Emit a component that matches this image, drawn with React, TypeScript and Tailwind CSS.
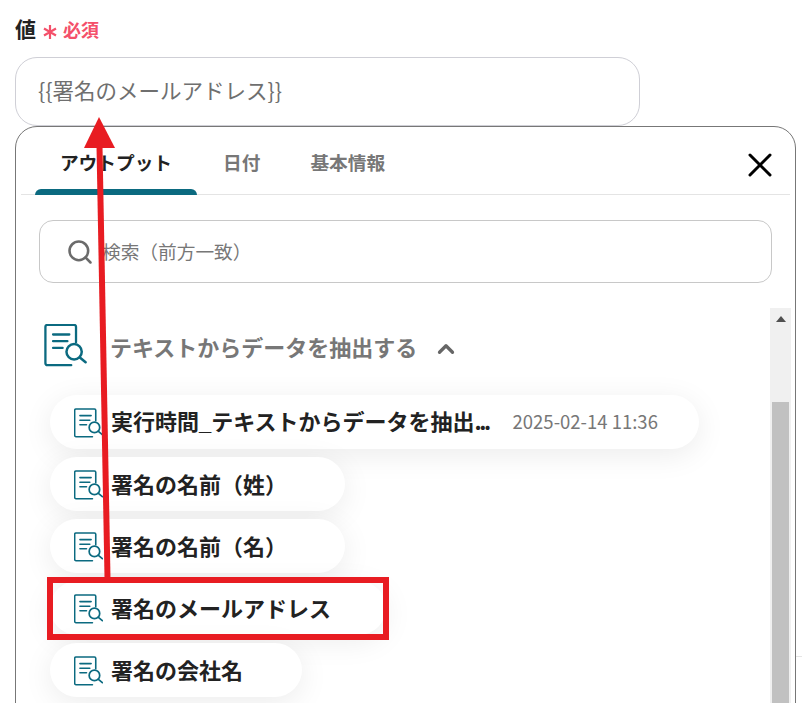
import React from "react";
import { Search, X, ChevronUp } from "lucide-react";

const DocIcon = ({ className }: { className: string }) => (
  <svg viewBox="0 0 44 46" fill="none" stroke="#0b6a80" strokeWidth="2.4" strokeLinecap="round" strokeLinejoin="round" className={className}>
    <path d="M28 43H3a2 2 0 0 1-2-2V3a2 2 0 0 1 2-2h28a2 2 0 0 1 2 2v16" />
    <path d="M9 11h17M9 18h15M9 25h10" />
    <circle cx="31" cy="29" r="8" strokeWidth="2.6" />
    <path d="M37 35l6 5" strokeWidth="2.6" />
  </svg>
);

const Row = ({ label, time, width }: { label: React.ReactNode; time?: string; width: string }) => (
  <div className={`flex h-[54px] items-center rounded-[27px] bg-white pl-[24px] shadow-[0_6px_30px_rgba(0,0,0,0.08)] ${width}`}>
    <DocIcon className="mt-[3px] h-[31px] w-[29px] shrink-0" />
    <span className="ml-[8px] mt-[-2px] whitespace-nowrap text-[22px] font-bold leading-none text-[#222]">{label}</span>
    {time && <span className="ml-[24px] whitespace-nowrap text-[18.5px] text-[#777]">{time}</span>}
  </div>
);

export default function App() {
  return (
    <div className="relative h-[703px] w-[802px] overflow-hidden bg-white font-['Noto_Sans_CJK_JP',sans-serif]">
      <div className="pl-[15px] pt-[13px]">
        <div className="flex h-[30px] items-center">
          <span className="text-[21px] font-bold leading-none text-[#222]">値</span>
          <svg viewBox="0 0 14 14" stroke="#f4506a" strokeWidth="2.2" className="ml-[7px] mt-[8px] h-[14px] w-[14px]">
            <path d="M7 0V14M1 3.500L13 10.500M13 3.500L1 10.500" />
          </svg>
          <span className="ml-[6px] mt-[2px] text-[18px] font-bold leading-none text-[#f4506a]">必須</span>
        </div>
        <div className="mt-[14px] flex h-[69px] w-[625px] items-center rounded-[22px] border border-[#cfcfd6] pb-[2px] pl-[22px] text-[21.5px] text-[#6f6f6f]">
          {"{{署名のメールアドレス}}"}
        </div>
        <div className="h-[600px] w-[781px] rounded-t-[22px] border border-[#777] bg-white">
          <div className="mx-[5px] flex h-[68px] items-end border-b border-[#e4e4e4]">
            <div className="ml-[14px] flex h-full w-[162px] items-center justify-center border-b-[6px] border-transparent pt-[9px]">
              <span className="text-[18.7px] font-bold text-[#222]">アウトプット</span>
            </div>
            <span className="ml-[26px] mt-[4px] self-center text-[18.7px] font-bold text-[#777]">日付</span>
            <span className="ml-[50px] mt-[4px] self-center text-[18.7px] font-bold text-[#777]">基本情報</span>
            <X className="ml-auto mr-[10px] mt-[8px] h-[40px] w-[40px] self-center text-black" strokeWidth={1.8} />
          </div>
          <div className="ml-[19px] -mt-[6px] h-[6px] w-[162px] rounded-t-[6px] bg-[#0b6a80]" />
          <div className="ml-[23px] mt-[25px] flex h-[63px] w-[733px] items-center rounded-[14px] border border-[#c8c8c8] pl-[26px]">
            <Search className="h-[28px] w-[28px] text-[#6b6b6b]" strokeWidth={2.2} />
            <span className="ml-[8px] text-[18.7px] text-[#777]">検索（前方一致）</span>
          </div>
          <div className="mt-[25px] flex">
            <div className="w-[754px] pl-[28px] pt-[15px]">
              <div className="flex h-[46px] items-center">
                <DocIcon className="h-[44px] w-[43px]" />
                <span className="ml-[23px] whitespace-nowrap text-[22px] font-bold leading-none text-[#777]">テキストからデータを抽出する</span>
                <ChevronUp className="ml-[16px] mt-[5px] h-[26px] w-[26px] text-[#666]" strokeWidth={3} />
              </div>
              <div className="ml-[6px] mt-[26px] flex flex-col gap-[8px]">
                <Row
                  label={
                    <>
                      実行時間<span className="font-['Liberation_Sans']">_</span>テキストからデータを抽出<span className="tracking-[-2.500px]">...</span>
                    </>
                  }
                  time="2025-02-14 11:36"
                  width="w-[649px]"
                />
                <Row label="署名の名前（姓）" width="w-[295px]" />
                <Row label="署名の名前（名）" width="w-[295px]" />
                <Row label="署名のメールアドレス" width="w-[336px]" />
                <Row label="署名の会社名" width="w-[252px]" />
              </div>
            </div>
            <div className="flex w-[21px] flex-col items-center bg-[#f0f0f0]">
              <div className="mt-[8px] h-0 w-0 border-x-[5px] border-b-[6px] border-x-transparent border-b-[#505050]" />
              <div className="mt-[80px] h-[400px] w-[17px] bg-[#c1c1c1]" />
            </div>
          </div>
        </div>
      </div>
      <div className="absolute left-[796px] top-[656px] h-px w-[6px] bg-[#e5e5e5]" />
      <div className="absolute left-[47px] top-[577px] h-[63px] w-[342px] border-[6px] border-[#e81c22]" />
      <svg viewBox="0 0 802 703" className="pointer-events-none absolute left-0 top-0 h-[703px] w-[802px]">
        <path d="M99.500 146L107.500 578" stroke="#e81c22" strokeWidth="6" fill="none" />
        <path d="M99 117L115 148L84 148Z" fill="#e81c22" />
      </svg>
    </div>
  );
}
